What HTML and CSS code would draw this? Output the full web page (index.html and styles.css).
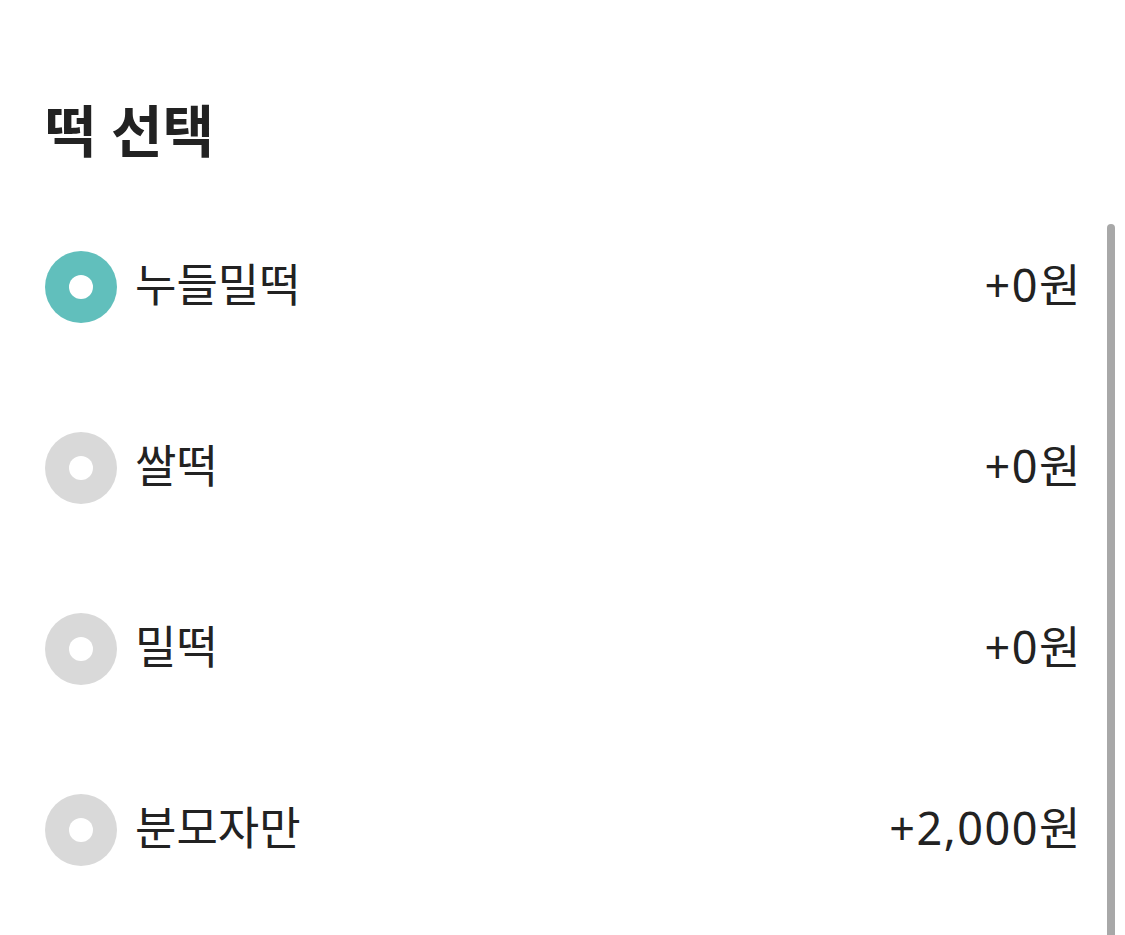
FILE: index.html
```html
<!DOCTYPE html>
<html lang="ko">
<head>
<meta charset="utf-8">
<link rel="stylesheet" href="styles.css">
</head>
<body>
<div class="sheet">
  <h2 class="title">떡 선택</h2>
  <ul class="options">
    <li class="option">
      <span class="radio checked"></span>
      <span class="label">누들밀떡</span>
      <span class="price">+0원</span>
    </li>
    <li class="option">
      <span class="radio"></span>
      <span class="label">쌀떡</span>
      <span class="price">+0원</span>
    </li>
    <li class="option">
      <span class="radio"></span>
      <span class="label">밀떡</span>
      <span class="price">+0원</span>
    </li>
    <li class="option">
      <span class="radio"></span>
      <span class="label">분모자만</span>
      <span class="price">+2,000원</span>
    </li>
  </ul>
  <div class="scroll-thumb"></div>
</div>
</body>
</html>
```

FILE: styles.css
```css
* { box-sizing: border-box; }
html, body {
  margin: 0;
  padding: 0;
  background: #ffffff;
}
body {
  font-family: "Noto Sans", "Noto Sans CJK KR", sans-serif;
  color: #222222;
  width: 1125px;
  height: 935px;
  overflow: hidden;
}
.sheet {
  position: relative;
  height: 935px;
  padding: 92px 43px 0 45px;
}
.title {
  margin: 0;
  height: 76px;
  font-size: 56px;
  line-height: 76px;
  font-weight: 700;
  color: #222222;
}
.options {
  list-style: none;
  margin: 28px 0 0 0;
  padding: 0;
}
.option {
  display: flex;
  align-items: center;
  height: 181px;
}
.radio {
  width: 72px;
  height: 72px;
  border-radius: 50%;
  background: #d9d9d9;
  display: flex;
  align-items: center;
  justify-content: center;
  flex-shrink: 0;
}
.radio::after {
  content: "";
  width: 24px;
  height: 24px;
  border-radius: 50%;
  background: #ffffff;
}
.radio.checked { background: #61bfbc; }
.label {
  margin-left: 18px;
  font-size: 45px;
  line-height: 1;
  flex: 1;
  padding-bottom: 4px;
}
.price {
  font-size: 45px;
  line-height: 1;
  letter-spacing: 1.5px;
  padding-bottom: 4px;
}
.scroll-thumb {
  position: absolute;
  left: 1107px;
  top: 224px;
  width: 8px;
  bottom: 0;
  background: #a8a8a8;
  border-radius: 4px 4px 0 0;
}
```
